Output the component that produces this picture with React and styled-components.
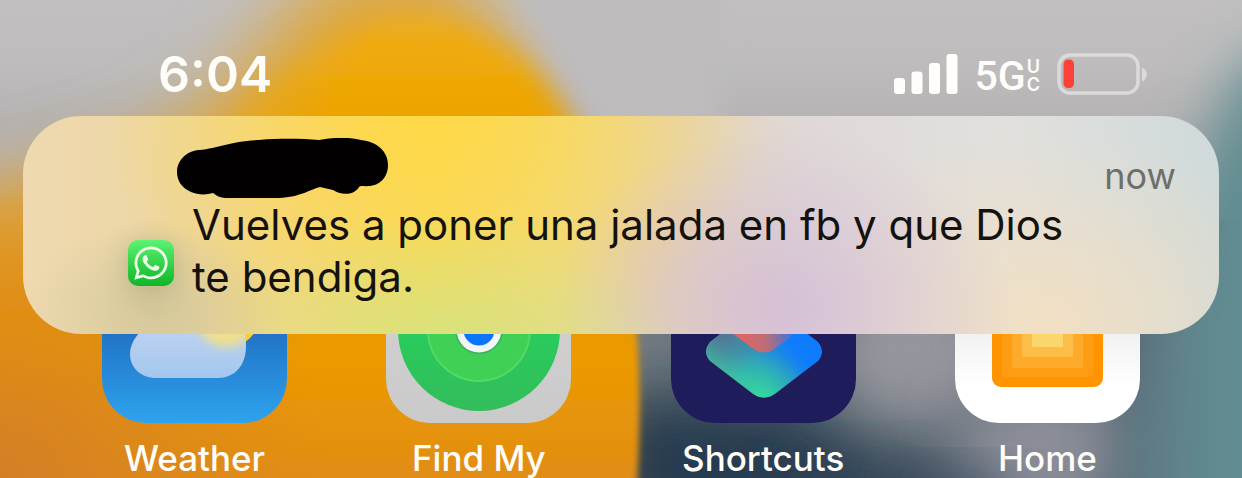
import React from "react";
import styled, { createGlobalStyle } from "styled-components";
import { FaWhatsapp } from "react-icons/fa";

const GlobalStyle = createGlobalStyle`
  *, *::before, *::after { box-sizing: border-box; }
  body {
    margin: 0;
    font-family: Inter, "Liberation Sans", sans-serif;
    overflow-x: hidden;
  }
`;

const Screen = styled.div`
  position: relative;
  isolation: isolate;
  overflow: hidden;
  min-height: 100vh;
`;

const WallpaperArt = styled.svg`
  position: absolute;
  inset: 0;
  z-index: -1;
  width: 100%;
  height: 100%;
`;

const StatusBar = styled.header`
  display: flex;
  align-items: center;
  justify-content: space-between;
  padding: 44px 94px 12px 158px;
  color: #fffdfa;
`;

const Clock = styled.time`
  font-size: 50px;
  font-weight: 600;
  line-height: 60px;
`;

const StatusIcons = styled.div`
  display: flex;
  align-items: center;
  gap: 17px;
`;

const Network = styled.span`
  display: flex;
  align-items: center;
  gap: 1px;
  padding-top: 4px;
  font-family: Roboto, "Liberation Sans", sans-serif;
  font-size: 41px;
  font-weight: 500;
  line-height: 40px;
`;

const NetworkSuffix = styled.span`
  display: flex;
  flex-direction: column;
  font-family: Inter, "Liberation Sans", sans-serif;
  font-size: 18px;
  font-weight: 600;
  line-height: 18px;
`;

const Notification = styled.article`
  position: relative;
  z-index: 1;
  display: flex;
  align-items: flex-end;
  gap: 18px;
  margin: 0 23px;
  padding: 22px 43px 31px 105px;
  border-radius: 58px;
  background:
    radial-gradient(ellipse 130px 90px at 11% 90%, rgba(165, 172, 135, 0.35), transparent),
    radial-gradient(ellipse 240px 140px at 35% 108%, rgba(208, 228, 130, 0.85), transparent),
    radial-gradient(ellipse 230px 180px at 63.5% 88%, rgba(210, 184, 214, 0.75), transparent),
    radial-gradient(ellipse 260px 190px at 86% 95%, rgba(243, 223, 192, 0.9), transparent),
    radial-gradient(ellipse 330px 260px at 34% 0%, rgba(255, 216, 68, 0.95), transparent),
    linear-gradient(90deg, #eed9b0 0%, #ecd6a2 14%, #f3d685 24%, #f5db6a 34%, #eed98a 44%, #e6d4b2 54%, #dfd8d6 65%, #e2e0dd 82%, #cfdada 100%);
`;

const SenderApp = styled.span`
  display: grid;
  place-items: center;
  flex: none;
  width: 46px;
  height: 46px;
  margin-bottom: 17px;
  border-radius: 10px;
  background: linear-gradient(#5cf272, #10b526);
  box-shadow: 0 4px 24px rgba(70, 90, 60, 0.25);
  color: #ecffe9;
  font-size: 38px;
`;

const NotificationBody = styled.div`
  flex: 1;
  min-width: 0;
`;

const NotificationHeader = styled.div`
  display: flex;
  align-items: flex-start;
  justify-content: space-between;
`;

const HiddenName = styled.svg`
  width: 212px;
  height: 61px;
  margin-left: -15px;
`;

const Received = styled.time`
  padding-top: 16px;
  color: #6d6f6b;
  font-size: 36px;
  line-height: 44px;
`;

const Message = styled.p`
  margin: 0;
  padding-right: 90px;
  color: #15120e;
  font-size: 42px;
  line-height: 52px;
`;

const AppRow = styled.nav`
  display: flex;
  justify-content: space-between;
  margin-top: -96px;
  padding: 0 102px;
`;

const AppButton = styled.button`
  display: flex;
  flex-direction: column;
  align-items: center;
  gap: 15px;
  width: 185px;
  padding: 0;
  border: 0;
  background: none;
  color: #fffdf8;
  font-family: inherit;
  font-size: 35px;
  font-weight: 500;
  line-height: 40px;
  white-space: nowrap;
`;

const AppTile = styled.span`
  display: block;
  width: 185px;
  height: 185px;
  border-radius: 44px;
  overflow: hidden;
  background: ${(p) => p.$fill};

  svg { display: block; }
`;

function Wallpaper() {
  return (
    <WallpaperArt viewBox="0 0 1242 478" preserveAspectRatio="none" aria-hidden="true">
      <defs>
        <linearGradient id="sky" x1="0" y1="0" x2="0" y2="1">
          <stop offset="0" stopColor="#c1bfc0" />
          <stop offset="0.13" stopColor="#bebcbd" />
          <stop offset="0.26" stopColor="#b4b2b3" />
        </linearGradient>
        <linearGradient id="amberTop" gradientUnits="userSpaceOnUse" x1="0" y1="0" x2="0" y2="200">
          <stop offset="0" stopColor="#ecb032" />
          <stop offset="0.25" stopColor="#f0aa08" />
          <stop offset="1" stopColor="#e79c00" />
        </linearGradient>
        <linearGradient id="amberLow" gradientUnits="userSpaceOnUse" x1="0" y1="190" x2="0" y2="478">
          <stop offset="0" stopColor="#e39a20" stopOpacity="0" />
          <stop offset="0.38" stopColor="#e89a08" />
          <stop offset="0.6" stopColor="#eb9a00" />
          <stop offset="1" stopColor="#e18d15" />
        </linearGradient>
        <radialGradient id="rust" gradientUnits="userSpaceOnUse" cx="0" cy="478" r="330">
          <stop offset="0" stopColor="#d47f26" />
          <stop offset="1" stopColor="#d88520" stopOpacity="0" />
        </radialGradient>
        <linearGradient id="teal" gradientUnits="userSpaceOnUse" x1="1120" y1="0" x2="1242" y2="0">
          <stop offset="0" stopColor="#5f7783" />
          <stop offset="1" stopColor="#628f93" />
        </linearGradient>
        <filter id="soft3" x="-30%" y="-30%" width="160%" height="160%"><feGaussianBlur stdDeviation="3" /></filter>
        <filter id="soft12" x="-30%" y="-30%" width="160%" height="160%"><feGaussianBlur stdDeviation="12" /></filter>
        <filter id="soft28" x="-60%" y="-60%" width="220%" height="220%"><feGaussianBlur stdDeviation="28" /></filter>
        <filter id="soft34" x="-60%" y="-60%" width="220%" height="220%"><feGaussianBlur stdDeviation="34" /></filter>
        <clipPath id="upper"><rect x="0" y="0" width="1242" height="220" /></clipPath>
        <clipPath id="lower"><rect x="0" y="220" width="1242" height="258" /></clipPath>
        <linearGradient id="leftFade" gradientUnits="userSpaceOnUse" x1="240" y1="28" x2="345" y2="88">
          <stop offset="0" stopColor="#000" />
          <stop offset="1" stopColor="#fff" />
        </linearGradient>
        <mask id="domeMask" maskUnits="userSpaceOnUse" x="0" y="-60" width="1242" height="600">
          <rect x="0" y="-60" width="1242" height="600" fill="url(#leftFade)" />
        </mask>
      </defs>
      <rect width="1242" height="478" fill="url(#sky)" />
      <g clipPath="url(#lower)">
        <rect x="560" y="220" width="682" height="258" fill="#56656f" />
        <ellipse cx="650" cy="335" rx="70" ry="40" fill="#747b86" filter="url(#soft28)" />
        <ellipse cx="690" cy="470" rx="170" ry="65" fill="#263a50" filter="url(#soft28)" />
        <ellipse cx="915" cy="350" rx="90" ry="75" fill="#95959d" filter="url(#soft28)" />
        <ellipse cx="860" cy="500" rx="90" ry="36" fill="#2f4053" filter="url(#soft28)" />
        <ellipse cx="1040" cy="450" rx="85" ry="75" fill="#8b8d98" filter="url(#soft28)" />
        <ellipse cx="950" cy="500" rx="60" ry="24" fill="#3b4a5e" filter="url(#soft28)" />
      </g>
      <path d="M1350 10 L1240 70 L1180 200 L1140 340 L1115 540 L1350 540 Z" fill="url(#teal)" filter="url(#soft28)" />
      <path d="M-100 250 C-20 150 90 190 195 112 C250 60 290 0 340 -40 L450 -40 L500 30 L570 130 L600 560 L-100 560 Z" fill="#dfa83c" filter="url(#soft34)" />
      <path d="M500 -60 C520 10 560 60 596 140 L720 140 L720 -60 Z" fill="#bebcbd" filter="url(#soft12)" />
      <g clipPath="url(#upper)" mask="url(#domeMask)">
        <path d="M200 330 L235 100 C300 60 350 18 420 16 C460 18 500 40 525 64 C550 90 562 110 576 136 L640 330 Z" fill="url(#amberTop)" filter="url(#soft12)" />
      </g>
      <path d="M-30 160 L610 160 C642 300 643 400 636 500 L-30 500 Z" fill="url(#amberLow)" filter="url(#soft3)" />
      <rect width="400" height="478" fill="url(#rust)" />
    </WallpaperArt>
  );
}

function Signal() {
  return (
    <svg width="64" height="40" viewBox="0 0 64 40" fill="currentColor" role="img" aria-label="Signal">
      <rect x="0" y="24" width="11" height="16" rx="3" />
      <rect x="17.5" y="17.5" width="11" height="22.5" rx="3" />
      <rect x="35" y="9" width="11" height="31" rx="3" />
      <rect x="52.5" y="0" width="11" height="40" rx="3" />
    </svg>
  );
}

function Battery() {
  return (
    <svg width="91" height="42" viewBox="0 0 91 42" role="img" aria-label="Battery low">
      <rect x="2" y="2" width="79" height="38" rx="11" fill="none" stroke="#dcdada" strokeWidth="3.5" />
      <rect x="6.5" y="6.5" width="10.5" height="28.5" rx="4.5" fill="#fe4136" />
      <path d="M85 14.5 C91.5 17 91.5 26 85 28.5 Z" fill="#dcdada" />
    </svg>
  );
}

function WeatherIcon() {
  return (
    <svg width="185" height="185" viewBox="0 0 185 185" aria-hidden="true">
      <defs>
        <linearGradient id="cloud" x1="0" y1="0" x2="0" y2="1">
          <stop offset="0" stopColor="#c4d4ee" />
          <stop offset="1" stopColor="#a3c7ee" />
        </linearGradient>
        <clipPath id="cloudShape">
          <path d="M54 140 C39 140 28 130 28 116 C28 103 38 92 50 84 L138 84 C142 90 144 98 144 108 C144 128 132 140 116 140 Z" />
        </clipPath>
        <filter id="glow" x="-30%" y="-30%" width="160%" height="160%"><feGaussianBlur stdDeviation="5" /></filter>
      </defs>
      <circle cx="124" cy="76" r="34" fill="#f9cd3a" />
      <g clipPath="url(#cloudShape)">
        <rect x="28" y="80" width="116" height="60" fill="url(#cloud)" />
        <circle cx="124" cy="80" r="29" fill="#efe08c" filter="url(#glow)" />
      </g>
    </svg>
  );
}

function FindMyIcon() {
  return (
    <svg width="185" height="185" viewBox="0 0 185 185" aria-hidden="true">
      <defs>
        <linearGradient id="radar" x1="0" y1="0" x2="0" y2="1">
          <stop offset="0.4" stopColor="#26cf5b" />
          <stop offset="1" stopColor="#33bd5b" />
        </linearGradient>
      </defs>
      <circle cx="93" cy="92" r="81" fill="url(#radar)" />
      <circle cx="93" cy="92" r="51" fill="#40d055" stroke="#57d865" strokeWidth="2" />
      <circle cx="93" cy="92" r="24" fill="#36b455" />
      <circle cx="93" cy="92" r="22.5" fill="#f3f5f7" />
      <circle cx="93" cy="92" r="15.5" fill="#0b76fb" />
    </svg>
  );
}

function ShortcutsIcon() {
  return (
    <svg width="185" height="185" viewBox="0 0 185 185" aria-hidden="true">
      <defs>
        <linearGradient id="blade" gradientUnits="userSpaceOnUse" x1="60" y1="140" x2="125" y2="85">
          <stop offset="0" stopColor="#3cc1a2" />
          <stop offset="0.45" stopColor="#2796cc" />
          <stop offset="0.8" stopColor="#0f7cfd" />
        </linearGradient>
        <radialGradient id="mint" gradientUnits="userSpaceOnUse" cx="90" cy="162" r="50">
          <stop offset="0" stopColor="#35dc9a" />
          <stop offset="1" stopColor="#35c0a8" stopOpacity="0" />
        </radialGradient>
        <radialGradient id="slate" gradientUnits="userSpaceOnUse" cx="52" cy="94" r="48">
          <stop offset="0" stopColor="#56708e" />
          <stop offset="1" stopColor="#4f8298" stopOpacity="0" />
        </radialGradient>
        <linearGradient id="coral" gradientUnits="userSpaceOnUse" x1="65" y1="100" x2="124" y2="94">
          <stop offset="0" stopColor="#e7645f" />
          <stop offset="0.5" stopColor="#bd6d78" />
          <stop offset="1" stopColor="#2f76e8" />
        </linearGradient>
        <path id="diamond" d="M39 104 L83 70 Q93 62 103 70 L147 104 Q155 114 147 123 L105 155 Q93 164 81 155 L39 123 Q31 114 39 104 Z" />
      </defs>
      <use href="#diamond" fill="url(#blade)" />
      <use href="#diamond" fill="url(#slate)" />
      <use href="#diamond" fill="url(#mint)" />
      <path d="M39 60 L147 60 Q155 69 147 78 L105 110 Q93 119 81 110 L39 78 Q31 69 39 60 Z" fill="url(#coral)" />
    </svg>
  );
}

const HOME_WALLS = [
  { x: 37, width: 111, bottom: 149, rx: 9, fill: "#ff9400" },
  { x: 47, width: 91, bottom: 139, rx: 4, fill: "#ff9d12" },
  { x: 57, width: 71, bottom: 130, rx: 2, fill: "#feab2b" },
  { x: 67, width: 51, bottom: 119, rx: 1, fill: "#fdbe47" },
  { x: 77, width: 31, bottom: 109, rx: 1, fill: "#fbd66c" },
];

function HomeIcon() {
  return (
    <svg width="185" height="185" viewBox="0 0 185 185" aria-hidden="true">
      {HOME_WALLS.map((wall) => (
        <rect key={wall.x} x={wall.x} y="60" width={wall.width} height={wall.bottom - 60} rx={wall.rx} fill={wall.fill} />
      ))}
    </svg>
  );
}

const APPS = [
  { name: "Weather", fill: "linear-gradient(#1b5fb4 30%, #2ea3ee)", Icon: WeatherIcon },
  { name: "Find My", fill: "linear-gradient(#d4d4d5, #cbcaca)", Icon: FindMyIcon },
  { name: "Shortcuts", fill: "#1e1c5b", Icon: ShortcutsIcon },
  { name: "Home", fill: "linear-gradient(#ececec 40%, #ffffff 80%)", Icon: HomeIcon },
];

export default function App() {
  return (
    <>
      <GlobalStyle />
      <Screen>
        <Wallpaper />
        <StatusBar>
          <Clock>6:04</Clock>
          <StatusIcons>
            <Signal />
            <Network>
              5G
              <NetworkSuffix>
                <span>U</span>
                <span>C</span>
              </NetworkSuffix>
            </Network>
            <Battery />
          </StatusIcons>
        </StatusBar>
        <Notification>
          <SenderApp>
            <FaWhatsapp aria-label="WhatsApp" />
          </SenderApp>
          <NotificationBody>
            <NotificationHeader>
              <HiddenName viewBox="0 0 212 61" aria-hidden="true">
                <path
                  d="M22 12 C42 10 54 3 82 2 C108 0 126 1 142 2 C158 -1 172 -1 184 2 C200 4 211 13 211 27 C211 39 203 48 191 48 C188 49 184 47 182 49 C177 58 163 57 156 52 L143 49 C134 51 124 59 102 60 L52 60 C43 60 40 58 36 55 C29 57 21 57 14 54 C5 50 0 43 0 34 C0 23 9 13 22 12 Z"
                  fill="#020001"
                />
              </HiddenName>
              <Received>now</Received>
            </NotificationHeader>
            <Message>Vuelves a poner una jalada en fb y que Dios te bendiga.</Message>
          </NotificationBody>
        </Notification>
        <AppRow>
          {APPS.map(({ name, fill, Icon }) => (
            <AppButton key={name} type="button">
              <AppTile $fill={fill}>
                <Icon />
              </AppTile>
              {name}
            </AppButton>
          ))}
        </AppRow>
      </Screen>
    </>
  );
}
